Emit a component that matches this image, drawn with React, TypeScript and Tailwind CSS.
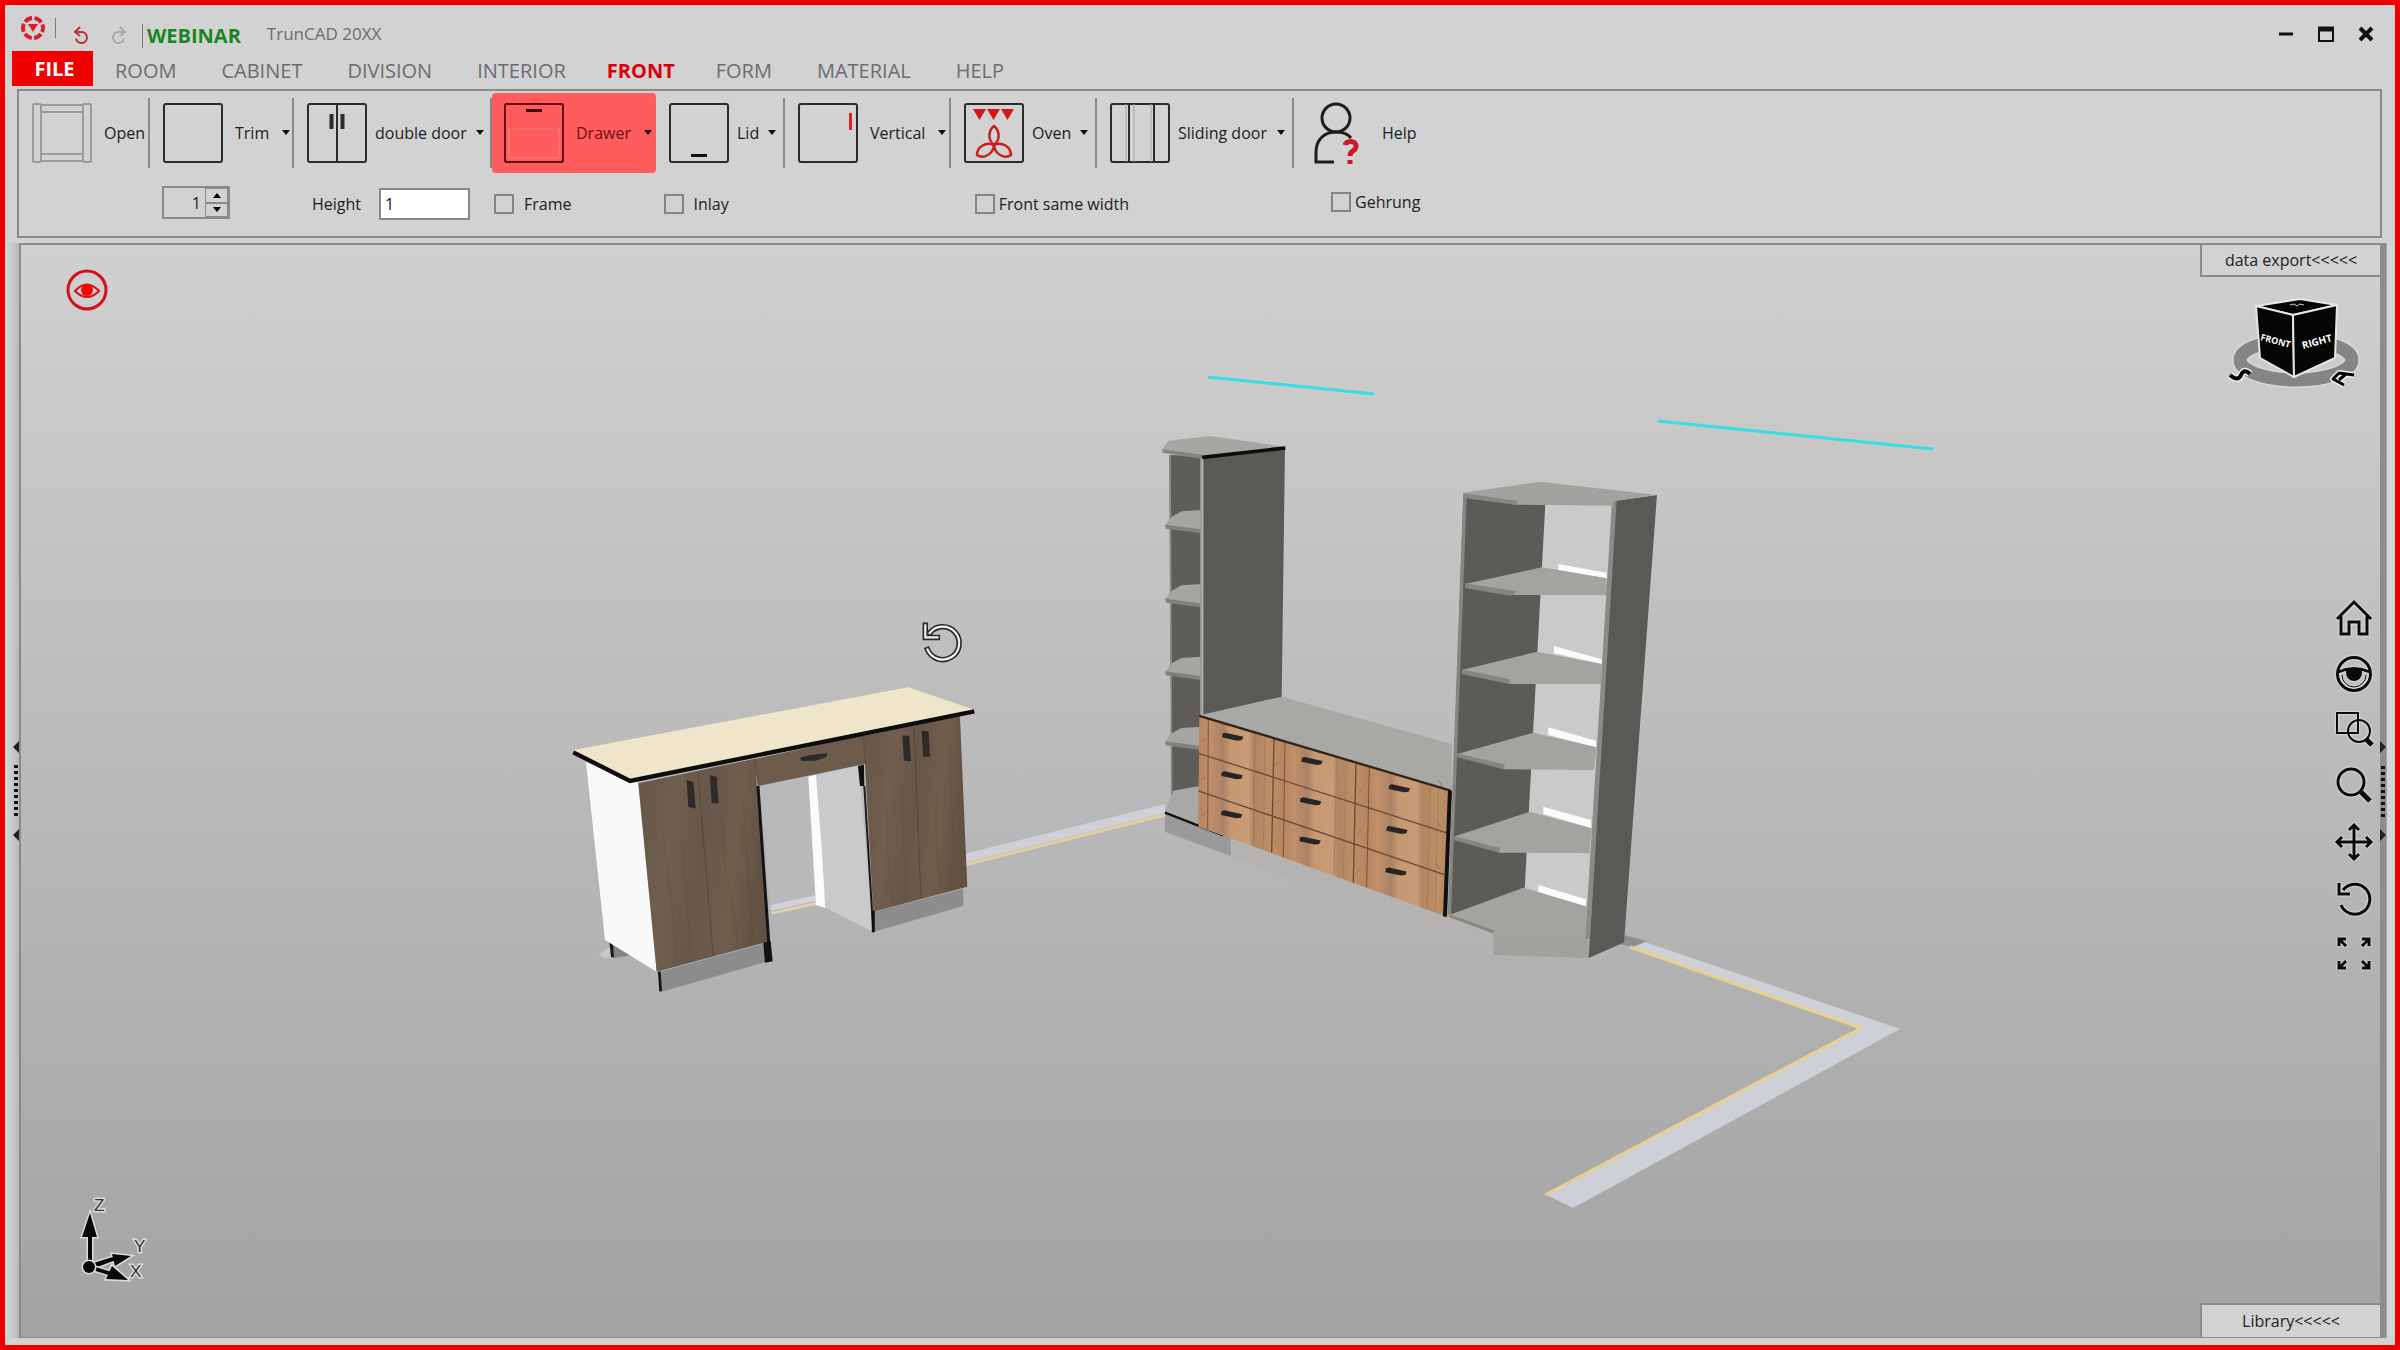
import React, { useState } from "react";
import clsx from "clsx";

const tabs = ["ROOM", "CABINET", "DIVISION", "INTERIOR", "FRONT", "FORM", "MATERIAL", "HELP"];

const tools = [
  { name: "Open", icon: "open", size: "w-[131px] gap-3", caret: false },
  { name: "Trim", icon: "trim", size: "w-[144px] gap-3", caret: true },
  { name: "double door", icon: "double", size: "w-[198px] gap-2", caret: true },
  { name: "Drawer", icon: "drawer", size: "w-[164px] gap-3", caret: true },
  { name: "Lid", icon: "lid", size: "w-[129px] gap-2", caret: true },
  { name: "Vertical", icon: "vertical", size: "w-[166px] gap-3", caret: true },
  { name: "Oven", icon: "oven", size: "w-[146px] gap-2", caret: true },
  { name: "Sliding door", icon: "sliding", size: "w-[197px] gap-2", caret: true },
];

function ToolIcon({ icon }: { icon: string }) {
  return (
    <svg viewBox="0 0 60 60" className="size-[60px] shrink-0" fill="none" stroke="#2b2b2b" strokeWidth="2">
      {icon === "open" ? (
        <g stroke="#9c9c9c">
          <rect x="1" y="1" width="8" height="58" rx="1" />
          <rect x="51" y="1" width="8" height="58" rx="1" />
          <path d="M9 2H51M9 9H51M9 51H51M9 58H51" />
        </g>
      ) : (
        <rect x="1" y="1" width="58" height="58" rx="2" />
      )}
      {icon === "double" && (
        <>
          <path d="M30 1V59" />
          <path d="M24.500 11V26M35.500 11V26" strokeWidth="4" />
        </>
      )}
      {icon === "drawer" && (
        <>
          <path d="M6 26H54" stroke="#e04a4c" strokeWidth="1" />
          <rect x="5" y="26" width="50" height="29" stroke="#ff7f80" strokeWidth="1" />
          <rect x="1" y="1" width="58" height="58" rx="2" stroke="#6b1014" />
          <path d="M22 7.500H38" stroke="#3a0a0c" strokeWidth="3" />
        </>
      )}
      {icon === "lid" && <path d="M22 52.500H38" stroke="#111" strokeWidth="3" />}
      {icon === "vertical" && <path d="M52.500 10V27" stroke="#d22" strokeWidth="3" />}
      {icon === "oven" && (
        <>
          <path d="M9 6H22L15.500 17ZM23 6H36L29.500 17ZM37 6H50L43.500 17Z" fill="#d01818" stroke="none" />
          <g stroke="#c81e1e" strokeWidth="2.500">
            <path d="M30 42C22 35 26 26 30 23C34 26 38 35 30 42Z" />
            <path d="M30 42C22 38 13 44 13 52C19 56 29 52 30 42Z" />
            <path d="M30 42C38 38 47 44 47 52C41 56 31 52 30 42Z" />
          </g>
        </>
      )}
      {icon === "sliding" && (
        <>
          <path d="M19 1V59M44 1V59" />
          <path d="M16 1V59M24 1V59M41 1V59" stroke="#a5a5a5" strokeWidth="1" />
        </>
      )}
    </svg>
  );
}

function Caret() {
  return (
    <svg viewBox="0 0 10 6" className="ml-auto mr-1.5 h-1.5 w-2.5 shrink-0">
      <path d="M1 0H9L5 5Z" fill="#111" />
    </svg>
  );
}

function CheckOption({ id, label, className }: { id: string; label: string; className: string }) {
  return (
    <div className={clsx("flex items-center", className)}>
      <input id={id} type="checkbox" className="size-5 appearance-none border-2 border-[#858585] checked:bg-[#e60000]" />
      <label htmlFor={id}>{label}</label>
    </div>
  );
}

const shelfTops = [
  "195,372 425,322 620,355 620,405 340,405",
  "185,630 412,575 605,612 603,672 328,672",
  "172,882 400,818 590,862 582,930 312,928",
  "160,1130 390,1055 575,1105 568,1180 300,1178",
  "148,1365 372,1283 560,1340 558,1435 280,1418",
];

const shelfEdges = [
  "195,370 195,384 335,408 350,394",
  "185,628 185,642 328,672 330,658",
  "172,880 172,892 312,928 314,914",
  "160,1128 160,1140 298,1178 300,1164",
  "148,1363 148,1372 278,1420 282,1412",
];

const backRails = [
  "475,312 620,338 620,355 475,330",
  "462,558 605,598 605,612 462,580",
  "445,802 588,842 588,862 445,825",
  "430,1040 573,1080 573,1104 430,1062",
  "415,1275 558,1318 556,1340 415,1298",
];

const drawerHandles = [
  [278, 952], [276, 1068], [275, 1185],
  [516, 1025], [512, 1146], [510, 1264],
  [778, 1107], [771, 1232], [768, 1357],
];

function Desk() {
  return (
    <g transform="translate(550 660) scale(.3333)">
      <polygon points="145,885 180,862 182,893 160,893" fill="#c9c9c9" />
      <polygon points="192,852 245,885 192,895" fill="#858585" />
      <polygon points="178,846 190,850 192,893 183,890" fill="#1a1a1a" />
      <polygon points="108,306 265,368 320,935 165,840" fill="#f9f9f9" />
      <polygon points="635,380 780,348 800,740 665,765" fill="#b9b9bb" />
      <polygon points="662,736 795,706 798,722 664,752" fill="#d2d2d8" />
      <path d="M665 760L798 730" stroke="#e3d3ae" strokeWidth="8" />
      <polygon points="798,346 928,316 968,815 824,742" fill="#c9cacc" />
      <polygon points="775,350 798,344 815,560 826,744 798,735" fill="#fbfbfb" />
      <polygon points="330,935 645,850 650,905 335,995" fill="#8c8c8d" />
      <polygon points="972,755 1240,686 1240,738 972,815" fill="#8d8d90" />
      <polygon points="265,370 615,296 655,845 320,935" fill="url(#walnut)" />
      <polygon points="612,298 940,226 945,312 625,378" fill="#6d5b4c" />
      <polygon points="940,228 1230,168 1252,680 970,755" fill="url(#walnut)" />
      <g stroke="#4d3f34" strokeWidth="3" fill="none" opacity=".7">
        <path d="M443 336L490 890M1092 200L1113 716M614 298L625 378M940 228L945 312" />
        <path d="M340 520Q350 620 365 740T380 900M520 480Q515 600 540 700T560 860M400 560Q405 700 425 890M580 420Q590 600 610 840" opacity=".35" />
        <path d="M1010 440Q1005 560 1030 735M1055 380Q1060 560 1070 720M1160 400Q1150 540 1175 690M1200 300L1215 680" opacity=".35" />
      </g>
      <path d="M624 378L660 900" stroke="#141414" strokeWidth="9" />
      <polygon points="640,848 662,844 668,904 645,908" fill="#111" />
      <polygon points="924,318 942,314 943,378 930,378" fill="#111" />
      <path d="M943 378L970 815" stroke="#1d1b1a" strokeWidth="6" />
      <path d="M970 752V817" stroke="#111" strokeWidth="9" />
      <path d="M328 935L332 994" stroke="#111" strokeWidth="8" />
      <g fill="#2d2a29">
        <polygon points="410,360 430,366 437,446 415,440" />
        <polygon points="480,346 500,350 506,430 485,430" />
        <polygon points="1057,226 1078,228 1083,304 1062,302" />
        <polygon points="1115,212 1136,214 1140,290 1120,290" />
        <polygon points="750,293 780,285 832,280 830,290 798,302 755,303" />
      </g>
      <polygon points="70,270 1075,82 1275,150 240,358" fill="#eee5cb" />
      <path d="M70 277L240 363L1273 154" fill="none" stroke="#0d0d0d" strokeWidth="13" />
    </g>
  );
}

function DrawerUnit() {
  return (
    <g transform="translate(1140 420) scale(.3333)">
      <polygon points="275,1262 915,1485 1070,1540 1070,1606 275,1312" fill="#b5b3b1" />
      <polygon points="88,105 182,108 182,1150 95,1130" fill="#5e5d59" />
      <path d="M90 105L95 1130" stroke="#8a8a88" strokeWidth="5" />
      {[0, 222, 440, 650].map((y) => (
        <g key={y} transform={`translate(0 ${y})`}>
          <polygon points="75,316 95,290 125,274 182,270 182,332" fill="#a5a5a2" />
          <polygon points="75,314 182,328 182,340 78,326" fill="#81817e" />
        </g>
      ))}
      <polygon points="75,1175 100,1112 178,1098 180,1216" fill="#a8a9a7" />
      <polygon points="75,1182 272,1250 272,1308 75,1235" fill="#9a9a9b" />
      <path d="M75 1178L250 1246" stroke="#111" strokeWidth="7" />
      <polygon points="190,112 435,85 425,835 190,888" fill="#5a5956" />
      <polygon points="66,90 85,62 210,48 435,80 190,106" fill="#a6a6a3" />
      <polygon points="66,88 190,104 184,116 68,98" fill="#858583" />
      <path d="M186 112L436 84" stroke="#0c0c0c" strokeWidth="11" />
      <path d="M184 114V886" stroke="#9d9d9b" strokeWidth="6" />
      <polygon points="182,885 425,830 460,840 935,972 935,1112" fill="#a8a8a5" />
      <polygon points="178,888 932,1112 918,1490 175,1220" fill="url(#oak)" />
      <g stroke="#8a6344" strokeWidth="3" opacity=".7">
        <path d="M205 897L203 1228M435 965L430 1312M688 1040L680 1402" stroke="#5f3c24" />
        <path d="M345 940L340 1275M375 950L370 1285M590 1010L582 1362M618 1020L610 1372M870 1095L862 1466M895 1102L886 1474" opacity=".5" />
        <path d="M183 965L198 955M183 1080L198 1070M183 1190L198 1178M400 1040L418 1025M400 1155L418 1140M400 1270L416 1255M655 1120L668 1104M650 1245L664 1228M648 1360L662 1344M895 1080L908 1100M890 1200L904 1222M888 1330L902 1350" />
      </g>
      <path d="M176 1000L925 1240M175 1113L920 1366M402 954L395 1298M648 1028L640 1388" stroke="#6b4a33" strokeWidth="4" />
      <path d="M178 888L932 1112" stroke="#30241b" strokeWidth="7" />
      <path d="M930 1112L915 1490" stroke="#101010" strokeWidth="12" />
      {drawerHandles.map(([x, y]) => (
        <polygon
          key={`${x}-${y}`}
          transform={`translate(${x} ${y})`}
          points="-30,-12 -22,-14 32,-2 28,8 14,10 -32,0"
          fill="#262424"
        />
      ))}
    </g>
  );
}

function TallShelf() {
  return (
    <g transform="translate(1400 460) scale(.3333)">
      <polygon points="435,130 640,130 560,1345 372,1290" fill="#c9caca" />
      <polygon points="190,108 436,130 374,1290 146,1366" fill="#5c5b57" />
      <polygon points="190,98 200,112 153,1366 143,1366" fill="#868683" />
      {backRails.map((points) => (
        <polygon key={points} points={points} fill="#fbfbfb" />
      ))}
      {shelfTops.map((points) => (
        <polygon key={points} points={points} fill="#a4a39f" />
      ))}
      {shelfEdges.map((points) => (
        <polygon key={points} points={points} fill="#868582" />
      ))}
      <polygon points="280,1418 565,1435 567,1494 280,1485" fill="#a3a19e" />
      <polygon points="645,122 771,105 672,1448 566,1494" fill="#5a5956" />
      <polygon points="636,122 650,121 570,1437 556,1436" fill="#8b8a87" />
      <polygon points="190,98 420,65 771,105 640,124 640,137 350,134 190,112" fill="#a3a29e" />
      <polygon points="190,100 350,122 350,134 190,114" fill="#888784" />
    </g>
  );
}

function RotateArrow() {
  return <path d="M5 25A15 15 0 1 0 7 10M3 3V14H14" />;
}

function ViewCube() {
  return (
    <g fontFamily="'Open Sans', sans-serif" fontWeight="700">
      <ellipse cx="2296" cy="360" rx="56" ry="20" fill="none" stroke="#d8d8d8" strokeWidth="16" />
      <ellipse cx="2296" cy="360" rx="56" ry="20" fill="none" stroke="#858585" strokeWidth="13" />
      <g stroke="#e6e6e6" strokeWidth="2" strokeLinejoin="round" fill="#050505">
        <polygon points="2256,306 2300,299 2337,305 2293,315" />
        <polygon points="2256,306 2293,315 2294,377 2260,358" />
        <polygon points="2293,315 2337,305 2335,358 2294,377" />
      </g>
      <path d="M2290 305l4-1 3 2 3-2 4 1" fill="none" stroke="#ccc" strokeWidth="1" />
      <text x="2260" y="340" fontSize="9" fill="#fff" transform="rotate(15 2260 340)">FRONT</text>
      <text x="2303" y="349" fontSize="10" fill="#fff" transform="rotate(-15 2303 349)">RIGHT</text>
      <g fill="none" strokeLinejoin="round">
        <path d="M2230 375Q2238 382 2241 375T2250 374" stroke="#eee" strokeWidth="7" />
        <path d="M2230 375Q2238 382 2241 375T2250 374" stroke="#050505" strokeWidth="4" />
        <path d="M2354 375L2339 373L2333 379L2344 385M2346 374L2339 380" stroke="#eee" strokeWidth="6" />
        <path d="M2354 375L2339 373L2333 379L2344 385M2346 374L2339 380" stroke="#050505" strokeWidth="3" />
      </g>
    </g>
  );
}

function Axes() {
  return (
    <g
      fill="#080808"
      stroke="#dcdcdc"
      strokeWidth="3"
      paintOrder="stroke"
      fontFamily="'Liberation Sans', sans-serif"
      fontSize="17"
    >
      <path d="M88 1236H92V1266H88ZM82 1237L90 1213L97 1237Z" />
      <path d="M90 1264L116 1256V1260L92 1269ZM112 1254L131 1256L115 1266Z" />
      <path d="M92 1266L112 1272V1276L92 1270ZM112 1266L128 1280L106 1279Z" />
      <circle cx="89" cy="1267" r="6" />
      <g fill="#333">
        <text x="94" y="1211">Z</text>
        <text x="134" y="1252">Y</text>
        <text x="130" y="1277">X</text>
      </g>
    </g>
  );
}

function Scene() {
  return (
    <svg viewBox="21 245 2359 1092" preserveAspectRatio="xMidYMid slice" className="absolute inset-0 size-full">
      <defs>
        <linearGradient id="walnut" x1="0" x2="1" y1="0" y2=".2">
          <stop offset="0" stopColor="#64564a" />
          <stop offset=".3" stopColor="#705e4e" />
          <stop offset=".55" stopColor="#66574a" />
          <stop offset=".8" stopColor="#705d4c" />
          <stop offset="1" stopColor="#625244" />
        </linearGradient>
        <linearGradient id="oak" x1="0" x2=".333" y1="0" y2="0" spreadMethod="repeat">
          <stop offset="0" stopColor="#b58660" />
          <stop offset=".14" stopColor="#c08f69" />
          <stop offset=".3" stopColor="#ab8266" />
          <stop offset=".38" stopColor="#c59871" />
          <stop offset=".6" stopColor="#c89c76" />
          <stop offset=".66" stopColor="#b08561" />
          <stop offset=".85" stopColor="#bd8f66" />
          <stop offset="1" stopColor="#b58660" />
        </linearGradient>
      </defs>

      <g stroke="#35dfe3" strokeWidth="3">
        <path d="M1208 377L1374 394M1658 421L1933 449" />
      </g>

      {/* floor outline */}
      <polygon points="960,855 1165,804 1165,813 960,864" fill="#d0d0d6" />
      <path d="M960 866L1165 815" stroke="#e0cfa0" strokeWidth="3" />
      <polygon points="1620,934 1647,941 1636,948 1620,944" fill="#8f8f92" />
      <polygon points="1645,942 1900,1029 1573,1208 1547,1195 1862,1028 1633,947" fill="#cdd0d6" />
      <path d="M1630 947L1861 1028L1545 1195" fill="none" stroke="#e9cf90" strokeWidth="3" />

      <Desk />
      <DrawerUnit />
      <TallShelf />

      <g transform="translate(922 622) scale(1.1)" fill="none" strokeLinecap="square">
        <g stroke="#2a2a2a" strokeWidth="5">
          <RotateArrow />
        </g>
        <g stroke="#f2f2f2" strokeWidth="2">
          <RotateArrow />
        </g>
      </g>
      <ViewCube />
      <Axes />
    </svg>
  );
}

const viewTools = [
  {
    name: "Home view",
    drawing: <path d="M1 19L18 2L35 19M5 16V34H13V22H23V34H31V16" />,
  },
  {
    name: "Look around",
    drawing: (
      <>
        <circle cx="18" cy="18" r="16.500" />
        <path d="M2 16Q18 9 34 16" />
        <path d="M6 19A12 12 0 0 0 30 19" strokeWidth="1" />
        <path d="M10 13H26V17A8 8 0 0 1 10 17Z" fill="#0a0a0a" stroke="none" />
      </>
    ),
  },
  {
    name: "Zoom window",
    drawing: (
      <>
        <rect x="1" y="1" width="21" height="20" strokeWidth="2" />
        <circle cx="23" cy="19" r="11" strokeWidth="2" />
        <path d="M30 27L36 33" strokeWidth="5" />
      </>
    ),
  },
  {
    name: "Zoom",
    drawing: (
      <>
        <circle cx="15" cy="14" r="13" />
        <path d="M25 24L34 33" strokeWidth="5" />
      </>
    ),
  },
  {
    name: "Pan",
    drawing: <path d="M18 1V35M1 18H35M13 6L18 1L23 6M13 30L18 35L23 30M6 13L1 18L6 23M30 13L35 18L30 23" />,
  },
  { name: "Rotate", drawing: <RotateArrow /> },
  {
    name: "Fit to screen",
    drawing: (
      <path d="M3 10V3H10M3 3L10 10M26 3H33V10M33 3L26 10M3 25V32H10M3 32L10 25M26 32H33V25M33 32L26 25" />
    ),
  },
];

function SplitHandle({ flip }: { flip?: boolean }) {
  return (
    <svg viewBox="0 0 8 100" className={clsx("h-[100px] w-2 shrink-0", flip && "rotate-180")} fill="#222">
      <path d="M8 0V12L2 6ZM8 88V100L2 94Z" />
      <path d="M5 24V76" stroke="#111" strokeWidth="4" strokeDasharray="3 3" />
    </svg>
  );
}

export default function App() {
  const [activeTab, setActiveTab] = useState("FRONT");
  const [activeTool, setActiveTool] = useState("Drawer");
  const [count, setCount] = useState(1);

  return (
    <div className="flex min-h-screen flex-col border-[5px] border-[#ee0000] bg-[#d2d2d2] font-['Open_Sans',sans-serif] text-base text-[#1c1c24]">
      {/* Title bar */}
      <header className="flex h-[46px] items-center pl-4 pr-[21px]">
        <svg viewBox="0 0 24 24" className="size-6" fill="none" stroke="#d8202c" strokeWidth="4">
          <circle cx="12" cy="12" r="10" strokeDasharray="8 2.470" strokeDashoffset="4" />
          <path d="M7 8H17L12 16Z" fill="#d8202c" stroke="none" />
        </svg>
        <span className="ml-2.5 h-5 w-px bg-[#777]" />
        <button aria-label="Undo" className="ml-4 mt-3.5">
          <svg viewBox="0 0 18 18" className="size-[18px]" fill="none" stroke="#b8323c" strokeWidth="2">
            <path d="M3 6H9.500A5.500 5.500 0 1 1 4 12.500M8 1L3 6L8 10" />
          </svg>
        </button>
        <button aria-label="Redo" className="ml-5 mt-3.5">
          <svg viewBox="0 0 18 18" className="size-[18px]" fill="none" stroke="#a9a9a9" strokeWidth="2">
            <path d="M15 6H8.500A5.500 5.500 0 1 0 14 12.500M10 1L15 6L10 10" />
          </svg>
        </button>
        <span className="ml-3.5 mt-4 h-6 w-px bg-[#777]" />
        <span className="ml-1 mt-4 text-xl font-bold text-[#16871f]">WEBINAR</span>
        <span className="ml-[26px] mt-3 text-[17px] text-[#6c6c70]">TrunCAD 20XX</span>
        <div className="ml-auto mt-3 flex items-center gap-6">
          <button aria-label="Minimize">
            <svg viewBox="0 0 16 16" className="size-4" stroke="#111" strokeWidth="3">
              <path d="M1 8H15" />
            </svg>
          </button>
          <button aria-label="Maximize">
            <svg viewBox="0 0 16 16" className="size-4" fill="none" stroke="#111" strokeWidth="2">
              <path d="M1 2V15H15V2" />
              <path d="M0 3H16" strokeWidth="5" />
            </svg>
          </button>
          <button aria-label="Close">
            <svg viewBox="0 0 16 16" className="size-4" stroke="#111" strokeWidth="4">
              <path d="M2 2L14 14M14 2L2 14" />
            </svg>
          </button>
        </div>
      </header>

      {/* Tabs */}
      <nav className="flex h-[35px] items-center pl-[7px] text-xl text-[#6c6c70]">
        <button className="h-full w-[81px] bg-[#f20000] pl-1 font-bold text-white">FILE</button>
        <div className="ml-[22px] flex gap-[45px] pt-1">
          {tabs.map((tab) => (
            <button
              key={tab}
              onClick={() => setActiveTab(tab)}
              className={clsx(tab === activeTab && "-mx-1 font-bold text-[#d8000c]")}
            >
              {tab}
            </button>
          ))}
        </div>
      </nav>

      {/* Ribbon */}
      <section className="ml-3 mr-[13px] mt-[3px] h-[149px] border-2 border-[#8a8a8a]">
        <div className="flex h-[83px] items-center">
          {tools.map((tool) => (
            <button
              key={tool.name}
              onClick={() => setActiveTool(tool.name)}
              className={clsx(
                "flex shrink-0 items-center whitespace-nowrap",
                tool.size,
                tool.name === activeTool
                  ? "h-20 rounded-sm bg-[#ff5c5e] pl-3 pr-1 text-[#6b1014]"
                  : "h-[70px] border-r-2 border-[#8a8a8a] pl-[13px]"
              )}
            >
              <ToolIcon icon={tool.icon} />
              {tool.name}
              {tool.caret && <Caret />}
            </button>
          ))}
          <button className="flex items-center gap-[18px] pl-5">
            <svg viewBox="0 0 50 62" className="h-[62px] w-[50px]" fill="none" stroke="#1d1d1d" strokeWidth="3">
              <ellipse cx="22" cy="16" rx="14" ry="14" />
              <path d="M20 60H2V50C2 38 10 30 22 30C29 30 34 32 37 36" />
              <path d="M31 43C32 38 43 38 42 45C41 50 36 48 36 54M36 58V62" stroke="#d01828" strokeWidth="5" />
            </svg>
            Help
          </button>
        </div>

        <div className="flex h-[62px] items-start pl-[143px] pt-3">
          <div className="flex h-[33px] w-[68px] border-2 border-[#8a8a8a]">
            <input
              aria-label="Count"
              value={count}
              onChange={(e) => setCount(Number(e.target.value) || 1)}
              className="w-[41px] bg-transparent pr-1 text-right"
            />
            <div className="flex w-[23px] flex-col">
              <button
                aria-label="Increase"
                onClick={() => setCount(count + 1)}
                className="flex flex-1 items-center justify-center border border-[#8a8a8a]"
              >
                <svg viewBox="0 0 8 5" className="h-[5px] w-2">
                  <path d="M0 5L4 0L8 5Z" />
                </svg>
              </button>
              <button
                aria-label="Decrease"
                onClick={() => setCount(Math.max(1, count - 1))}
                className="flex flex-1 items-center justify-center border border-[#8a8a8a]"
              >
                <svg viewBox="0 0 8 5" className="h-[5px] w-2">
                  <path d="M0 0L4 5L8 0Z" />
                </svg>
              </button>
            </div>
          </div>
          <label htmlFor="height" className="ml-[82px] mt-1.5">
            Height
          </label>
          <input
            id="height"
            defaultValue="1"
            className="ml-[18px] mt-0.5 h-8 w-[91px] border-2 border-[#8a8a8a] bg-white px-1"
          />
          <CheckOption id="frame" label="Frame" className="ml-6 mt-1.5 gap-2.5" />
          <CheckOption id="inlay" label="Inlay" className="ml-[92px] mt-1.5 gap-2.5" />
          <CheckOption id="same-width" label="Front same width" className="ml-[246px] mt-1.5 gap-1" />
          <CheckOption id="gehrung" label="Gehrung" className="ml-[202px] mt-1 gap-1" />
        </div>
      </section>

      {/* Viewport */}
      <main className="mb-[7px] mt-[5px] flex flex-1">
        <div className="flex w-3.5 items-center justify-end bg-linear-to-r from-[#d3dcdc] to-[#b4baba]">
          <SplitHandle />
        </div>
        <div className="relative flex-1 border-b border-l-2 border-t-2 border-[#8a8a8a] bg-linear-to-b from-[#d0d0d0] to-[#a3a3a3]">
          <Scene />

          <button aria-label="Toggle visibility" className="absolute left-[45px] top-[24px]">
            <svg viewBox="0 0 42 42" className="size-[42px]" fill="none" stroke="#d3101c">
              <circle cx="21" cy="21" r="19" strokeWidth="3" />
              <path d="M9 22Q21 9 33 22Q21 34 9 22Z" strokeWidth="2" />
              <circle cx="21" cy="21" r="6" fill="#f00" stroke="none" />
            </svg>
          </button>

          <button className="absolute right-0 top-0 h-8 w-[180px] border-b-2 border-l-2 border-[#8a8a8a] bg-[#d2d2d2] text-center">
            data export&lt;&lt;&lt;&lt;&lt;
          </button>

          <div className="absolute right-2 top-[355px] flex flex-col gap-5">
            {viewTools.map((tool) => (
              <button key={tool.name} aria-label={tool.name} className="size-9">
                <svg
                  viewBox="0 0 36 36"
                  className="size-9 overflow-visible drop-shadow-[0_0_1px_white]"
                  fill="none"
                  stroke="#0a0a0a"
                  strokeWidth="3"
                >
                  {tool.drawing}
                </svg>
              </button>
            ))}
          </div>

          <button className="absolute bottom-0 right-0 h-[34px] w-[180px] border-l-2 border-t-2 border-[#8a8a8a] bg-[#d2d2d2] text-center">
            Library&lt;&lt;&lt;&lt;&lt;
          </button>
        </div>
        <div className="flex w-[15px] items-center bg-linear-to-r from-[#8c8c8c] from-40% to-[#cfd8d8] to-50%">
          <SplitHandle flip />
        </div>
      </main>
    </div>
  );
}
